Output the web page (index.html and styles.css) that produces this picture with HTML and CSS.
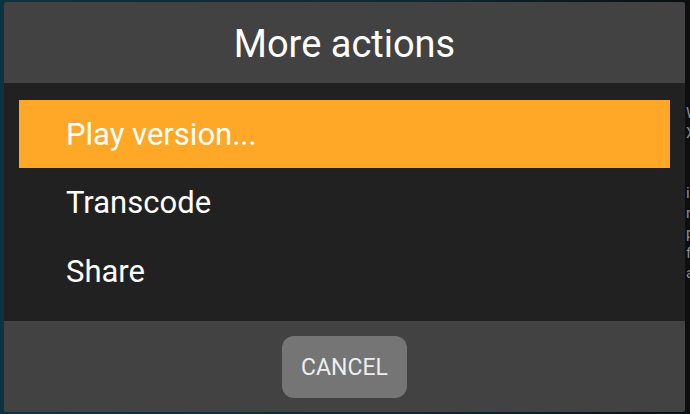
FILE: index.html
```html
<!DOCTYPE html>
<html lang="en">
<head>
    <meta charset="UTF-8">
    <meta name="viewport" content="width=device-width, initial-scale=1.0">
    <title>More actions</title>
    <link rel="stylesheet" href="styles.css">
</head>
<body>
<div class="screen">
    <div class="dialog">
        <div class="dialog-header">More actions</div>
        <ul class="action-list">
            <li class="action selected">Play version...</li>
            <li class="action">Transcode</li>
            <li class="action">Share</li>
        </ul>
        <div class="dialog-footer">
            <button class="cancel">CANCEL</button>
        </div>
    </div>
    <div class="behind">
        <p class="behind-top">W<br>X</p>
        <p class="behind-body">i<br>n<br>p<br>f<br>a</p>
    </div>
</div>
</body>
</html>
```

FILE: styles.css
```css
html, body {
    margin: 0;
    padding: 0;
}
body {
    font-family: Roboto, "Noto Sans", sans-serif;
    background: linear-gradient(90deg, #0b3443 0%, #0a2a36 60%, #0a0f12 100%);
    width: 690px;
    height: 414px;
    overflow: hidden;
}
.screen {
    display: flex;
    padding: 2px 0 2px 4px;
    height: 414px;
    box-sizing: border-box;
}
.dialog {
    width: 681px;
    height: 410px;
    display: flex;
    flex-direction: column;
    background-color: #424242;
    border-radius: 2px;
    flex-shrink: 0;
}
.dialog-header {
    height: 81px;
    display: flex;
    align-items: center;
    justify-content: center;
    color: #ffffff;
    font-size: 38px;
    padding-top: 2px;
    box-sizing: border-box;
}
.action-list {
    list-style: none;
    margin: 0;
    padding: 16px 15px 15px 15px;
    background-color: #212121;
    height: 238px;
    box-sizing: border-box;
}
.action {
    height: 69px;
    display: flex;
    align-items: center;
    padding-left: 47px;
    color: #ffffff;
    font-size: 31px;
}
.action.selected {
    background-color: #ffa726;
    border-top: 1px solid #1d2233;
    box-sizing: border-box;
}
.dialog-footer {
    flex: 1;
    display: flex;
    justify-content: center;
    align-items: flex-start;
    padding-top: 15px;
}
.cancel {
    width: 125px;
    height: 62px;
    background-color: #757575;
    color: #eeeeee;
    border: none;
    border-radius: 12px;
    font-family: Roboto, "Noto Sans", sans-serif;
    font-size: 23px;
    padding: 0;
}
.behind {
    background-color: #0b0f11;
    color: #8e8e8e;
    font-size: 15px;
    overflow: hidden;
    width: 5px;
    flex-shrink: 0;
    margin-top: -2px;
    height: 414px;
}
.behind p {
    margin: 0;
    padding-left: 1px;
    line-height: 20px;
    white-space: nowrap;
}
.behind-top {
    padding-top: 103px;
}
.behind-body {
    padding-top: 40px;
}
```
